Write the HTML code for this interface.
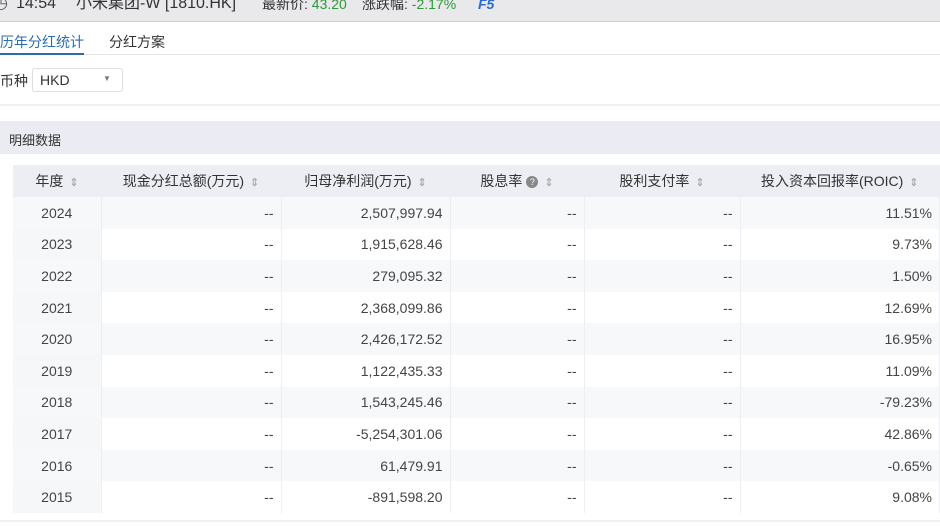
<!DOCTYPE html>
<html><head><meta charset="utf-8"><style>
*{margin:0;padding:0;box-sizing:border-box}
body{width:940px;height:528px;overflow:hidden;background:#fff;font-family:"Liberation Sans","Noto Sans CJK SC",sans-serif;color:#333;position:relative}
.top{position:absolute;left:0;top:0;width:940px;height:22px;background:#e9e9ec;border-bottom:1px solid #d0d0d5;font-size:16px;line-height:12px;white-space:nowrap;overflow:hidden}
.top span{position:absolute;top:-2px}
.tabs{position:absolute;top:22px;left:0;width:940px;height:33px;border-bottom:1px solid #e4e4e8}
.tab{position:absolute;top:10px;font-size:14px}
.sel{position:absolute;left:32px;top:68px;width:91px;height:24px;border:1px solid #ddd;border-radius:3px;font-size:14px;padding:3px 7px}
.div{position:absolute;left:0;top:104px;width:940px;height:2px;background:#f0f0f2}
.sec{position:absolute;left:0;top:121px;width:940px;height:33px;background:#ebebf3;font-size:13px;padding:9px 9px}
table{position:absolute;left:13px;top:165px;width:927px;border-collapse:collapse;font-size:14px}
th{height:32px;background:#eceef4;font-weight:normal;color:#333}
td{height:31.6px;text-align:right;padding-right:7px;border-right:1px solid #eceef2;color:#444}
td:first-child{text-align:center;padding:0;background:#f6f7f9}
tr:nth-child(even) td{background:#f7f8fa}
.ar{color:#999;font-size:11px;margin-left:6px}
.q{display:inline-block;width:12px;height:12px;border-radius:50%;background:#888;color:#fff;font-size:9px;line-height:12px;text-align:center;vertical-align:1px;margin-left:4px}
</style></head><body>
<div class="top"><span style="left:-6px;color:#555">◷</span><span style="left:16px">14:54</span><span style="left:76px">小米集团-W [1810.HK]</span><span style="left:262px;font-size:14px">最新价: <b style="font-weight:normal;color:#2a9a3a">43.20</b></span><span style="left:362px;font-size:14px">涨跌幅: <b style="font-weight:normal;color:#2a9a3a">-2.17%</b></span><span style="left:478px;color:#2d6bc7;font-weight:bold;font-style:italic;font-size:14px">F5</span></div>
<div class="tabs"><div class="tab" style="left:0;color:#2b6cb0">历年分红统计</div><div style="position:absolute;left:0;top:31px;width:84px;height:2px;background:#2b6cb0"></div><div class="tab" style="left:109px">分红方案</div></div>
<div style="position:absolute;left:0;top:71px;font-size:14px">币种</div>
<div class="sel">HKD<span style="position:absolute;left:70px;top:5px;font-size:8px;color:#777">▼</span></div>
<div class="div"></div>
<div class="sec">明细数据</div>
<table>
<tr><th style="width:88px">年度<span class="ar">⇕</span></th><th style="width:180px">现金分红总额(万元)<span class="ar">⇕</span></th><th style="width:169px">归母净利润(万元)<span class="ar">⇕</span></th><th style="width:134px">股息率<span class="q">?</span><span class="ar">⇕</span></th><th style="width:156px">股利支付率<span class="ar">⇕</span></th><th>投入资本回报率(ROIC)<span class="ar">⇕</span></th></tr>
<tr><td>2024</td><td>--</td><td>2,507,997.94</td><td>--</td><td>--</td><td>11.51%</td></tr>
<tr><td>2023</td><td>--</td><td>1,915,628.46</td><td>--</td><td>--</td><td>9.73%</td></tr>
<tr><td>2022</td><td>--</td><td>279,095.32</td><td>--</td><td>--</td><td>1.50%</td></tr>
<tr><td>2021</td><td>--</td><td>2,368,099.86</td><td>--</td><td>--</td><td>12.69%</td></tr>
<tr><td>2020</td><td>--</td><td>2,426,172.52</td><td>--</td><td>--</td><td>16.95%</td></tr>
<tr><td>2019</td><td>--</td><td>1,122,435.33</td><td>--</td><td>--</td><td>11.09%</td></tr>
<tr><td>2018</td><td>--</td><td>1,543,245.46</td><td>--</td><td>--</td><td>-79.23%</td></tr>
<tr><td>2017</td><td>--</td><td>-5,254,301.06</td><td>--</td><td>--</td><td>42.86%</td></tr>
<tr><td>2016</td><td>--</td><td>61,479.91</td><td>--</td><td>--</td><td>-0.65%</td></tr>
<tr><td>2015</td><td>--</td><td>-891,598.20</td><td>--</td><td>--</td><td>9.08%</td></tr>
</table>
<div style="position:absolute;left:0;top:520px;width:940px;height:2px;background:#f0f0f2"></div>
</body></html>
